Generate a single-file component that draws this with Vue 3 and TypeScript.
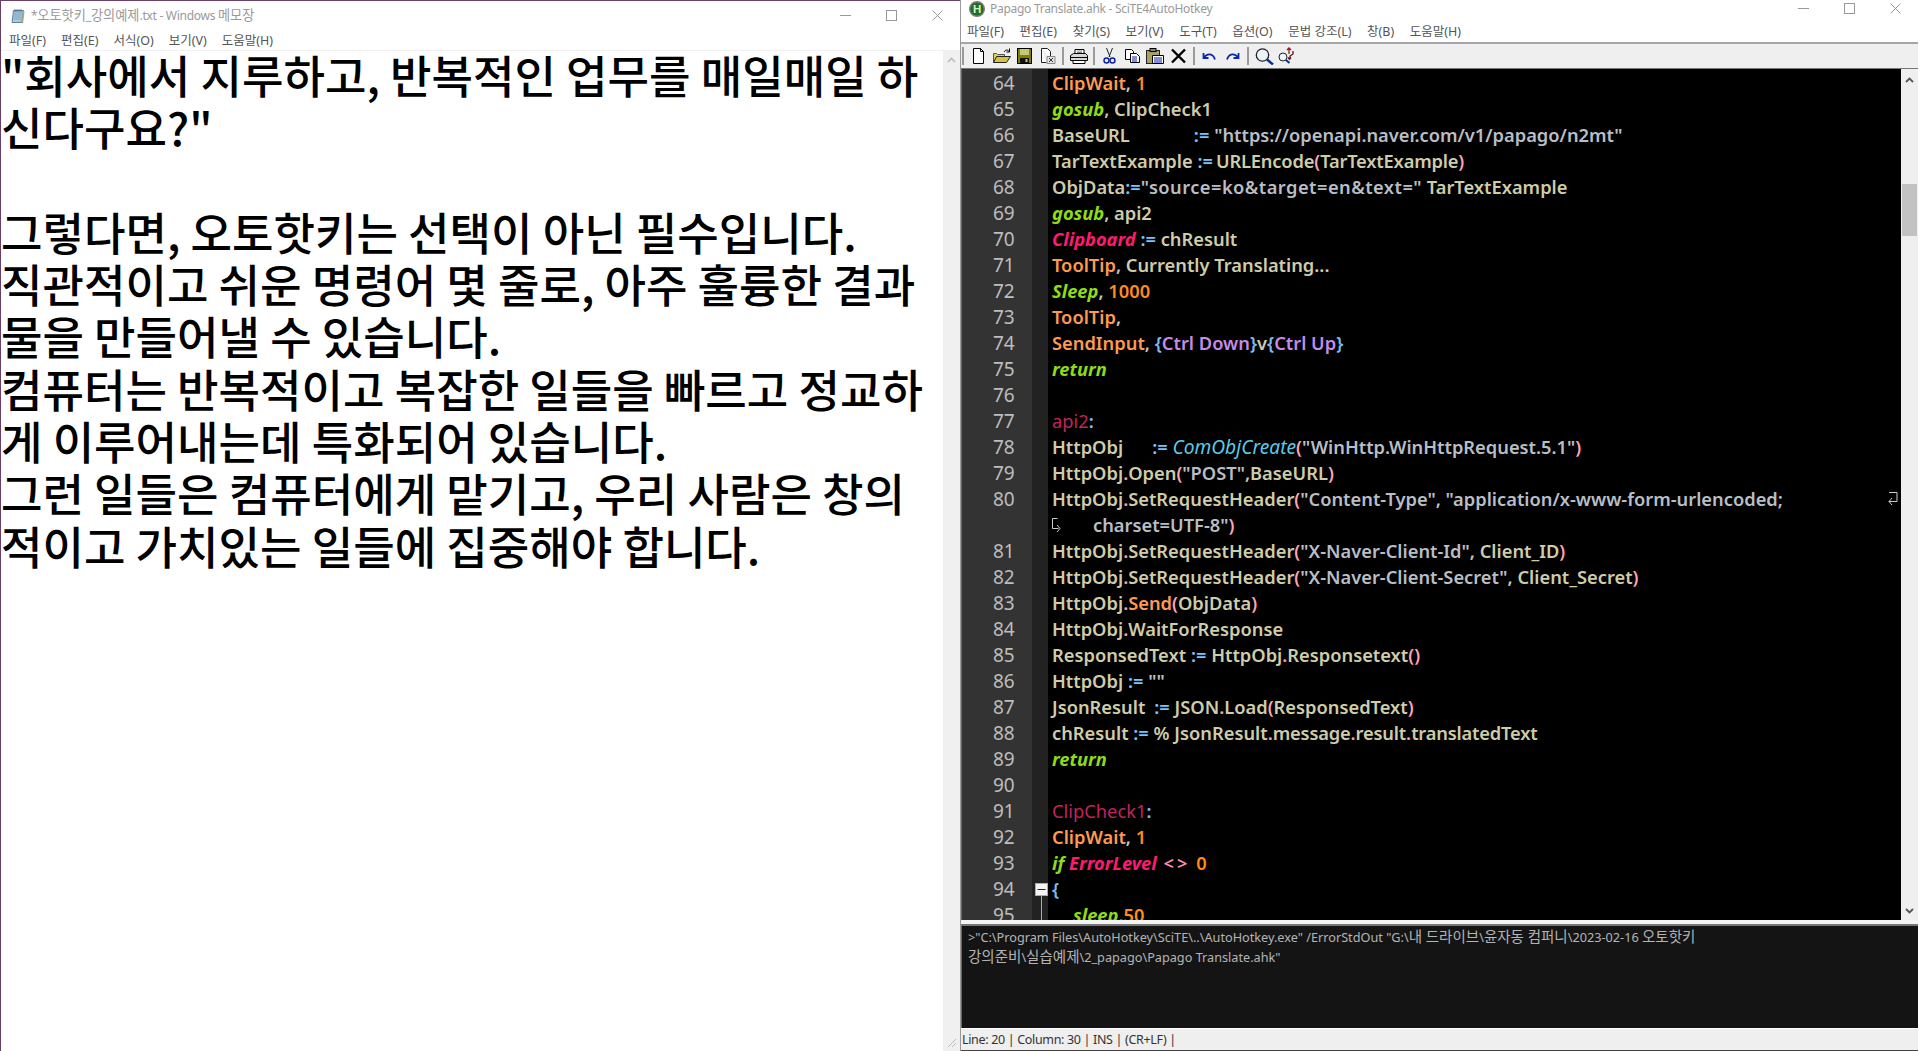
<script setup lang="ts">
interface Seg { t?: string; c?: string; gap?: number }
interface Row { n?: number; segs: Seg[]; indent?: number; wrapStart?: boolean; wrapEnd?: boolean; fold?: boolean; foldLine?: boolean }

const noteLines = [
  '"회사에서 지루하고, 반복적인 업무를 매일매일 하',
  '신다구요?"',
  '',
  '그렇다면, 오토핫키는 선택이 아닌 필수입니다.',
  '직관적이고 쉬운 명령어 몇 줄로, 아주 훌륭한 결과',
  '물을 만들어낼 수 있습니다.',
  '컴퓨터는 반복적이고 복잡한 일들을 빠르고 정교하',
  '게 이루어내는데 특화되어 있습니다.',
  '그런 일들은 컴퓨터에게 맡기고, 우리 사람은 창의',
  '적이고 가치있는 일들에 집중해야 합니다.',
]
const noteMenu = ['파일(F)', '편집(E)', '서식(O)', '보기(V)', '도움말(H)']
const sciMenu = ['파일(F)', '편집(E)', '찾기(S)', '보기(V)', '도구(T)', '옵션(O)', '문법 강조(L)', '창(B)', '도움말(H)']

const s = (t: string, c = 'tx'): Seg => ({ t, c })
const hdr = (a: string, rest: Seg[]): Seg[] => [s('HttpObj'), s('.', 'pn'), s('SetRequestHeader'), s('(', 'pr'), s(a, 'st'), ...rest]

const rows: Row[] = [
  { n: 64, segs: [s('ClipWait', 'cmd'), s(', ', 'cm'), s('1', 'num')] },
  { n: 65, segs: [s('gosub', 'kw'), s(', ', 'cm'), s('ClipCheck1')] },
  { n: 66, segs: [s('BaseURL'), { gap: 64 }, s(':=', 'op'), s(' '), s('"https://openapi.naver.com/v1/papago/n2mt"', 'st')] },
  { n: 67, segs: [s('TarTextExample'), s(' '), s(':=', 'op'), { gap: 3 }, s('URLEncode tight'), s('(', 'pr'), s('TarTextExample tight'), s(')', 'pr')].map(g => g.t === 'URLEncode tight' ? s('URLEncode', 'tx tight') : g.t === 'TarTextExample tight' ? s('TarTextExample', 'tx tight') : g) },
  { n: 68, segs: [s('ObjData'), s(':=', 'op'), s('"source=ko&target=en&text="', 'st wide'), s(' TarTextExample')] },
  { n: 69, segs: [s('gosub', 'kw'), s(', ', 'cm'), s('api2')] },
  { n: 70, segs: [s('Clipboard', 'var'), s(' '), s(':=', 'op'), s(' chResult')] },
  { n: 71, segs: [s('ToolTip', 'cmd'), s(', ', 'cm'), s('Currently Translating...')] },
  { n: 72, segs: [s('Sleep', 'kw'), s(', ', 'cm'), s('1000', 'num')] },
  { n: 73, segs: [s('ToolTip', 'cmd'), s(',', 'cm')] },
  { n: 74, segs: [s('SendInput', 'cmd'), s(', ', 'cm'), s('{', 'br'), s('Ctrl Down', 'key'), s('}', 'br'), s('v'), s('{', 'br'), s('Ctrl Up', 'key'), s('}', 'br')] },
  { n: 75, segs: [s('return', 'kw')] },
  { n: 76, segs: [] },
  { n: 77, segs: [s('api2', 'lb'), s(':', 'op')] },
  { n: 78, segs: [s('HttpObj'), { gap: 29 }, s(':=', 'op'), s(' '), s('ComObjCreate', 'fn'), s('(', 'pr'), s('"WinHttp.WinHttpRequest.5.1"', 'st'), s(')', 'pr')] },
  { n: 79, segs: [s('HttpObj'), s('.', 'pn'), s('Open'), s('(', 'pr'), s('"POST"', 'st'), s(',', 'cm'), s('BaseURL'), s(')', 'pr')] },
  { n: 80, segs: hdr('"Content-Type"', [s(', ', 'cm'), s('"application/x-www-form-urlencoded;', 'st')]), wrapEnd: true },
  { segs: [s('charset=UTF-8"', 'st'), s(')', 'pr')], wrapStart: true },
  { n: 81, segs: hdr('"X-Naver-Client-Id"', [s(', ', 'cm'), s('Client_ID'), s(')', 'pr')]) },
  { n: 82, segs: hdr('"X-Naver-Client-Secret"', [s(', ', 'cm'), s('Client_Secret'), s(')', 'pr')]) },
  { n: 83, segs: [s('HttpObj'), s('.', 'pn'), s('Send', 'cmd'), s('(', 'pr'), s('ObjData'), s(')', 'pr')] },
  { n: 84, segs: [s('HttpObj'), s('.', 'pn'), s('WaitForResponse')] },
  { n: 85, segs: [s('ResponsedText '), s(':=', 'op'), s(' HttpObj'), s('.', 'pn'), s('Responsetext'), s('()', 'pr')] },
  { n: 86, segs: [s('HttpObj '), s(':=', 'op'), s(' '), s('""', 'st')] },
  { n: 87, segs: [s('JsonResult'), { gap: 9 }, s(':=', 'op'), s(' '), s('JSON'), s('.', 'pn'), s('Load'), s('(', 'pr'), s('ResponsedText'), s(')', 'pr')] },
  { n: 88, segs: [s('chResult '), s(':=', 'op'), s(' % JsonResult'), s('.', 'pn'), s('message', 'tx tight'), s('.', 'pn'), s('result', 'tx tight'), s('.', 'pn'), s('translatedText', 'tx tight')] },
  { n: 89, segs: [s('return', 'kw')] },
  { n: 90, segs: [] },
  { n: 91, segs: [s('ClipCheck1', 'lb'), s(':', 'op')] },
  { n: 92, segs: [s('ClipWait', 'cmd'), s(', ', 'cm'), s('1', 'num')] },
  { n: 93, segs: [s('if', 'kw'), s(' '), s('ErrorLevel', 'var'), s(' '), s('<>', 'cmp'), s(' '), s('0', 'num')] },
  { n: 94, segs: [s('{', 'br')], fold: true },
  { n: 95, segs: [s('sleep', 'kw'), s(',', 'cm'), s('50', 'num')], indent: 25, foldLine: true },
]
</script>

<template>
  <div class="desk">
    <section class="notepad">
      <header class="title n-title">
        <svg class="n-icon" width="16" height="16" viewBox="0 0 16 16">
          <path d="M3.5 2.5h10l-1.5 12h-10z" fill="#a8cbe0" stroke="#5d8399" />
          <path d="M13.2 3l1 0.5-1.5 11.5-0.8-0.5z" fill="#d6c98a" stroke="#8d8a60" stroke-width="0.5" />
          <path d="M4 5h8M3.8 7h8M3.5 9h8M3.3 11h8" stroke="#6f9ab3" stroke-width="0.7" />
          <path d="M5 1v3M7 1v3M9 1v3M11 1v3" stroke="#536c7d" stroke-width="0.8" />
        </svg>
        <span class="title-text">*<span class="ko">오토핫키</span>_<span class="ko">강의예제</span>.txt - Windows <span class="ko">메모장</span></span>
        <div class="controls n-controls">
          <i class="ctl"><svg width="11" height="11" viewBox="0 0 11 11"><path d="M0 5.5h11" stroke="#999" /></svg></i>
          <i class="ctl"><svg width="11" height="11" viewBox="0 0 11 11"><rect x=".5" y=".5" width="10" height="10" fill="none" stroke="#999" /></svg></i>
          <i class="ctl"><svg width="11" height="11" viewBox="0 0 11 11"><path d="M.5.5l10 10M10.5.5l-10 10" stroke="#999" /></svg></i>
        </div>
      </header>
      <nav class="n-menu">
        <span v-for="m in noteMenu" :key="m">{{ m }}</span>
      </nav>
      <div class="n-body">
        <div class="n-text">
          <div v-for="(l, i) in noteLines" :key="i" class="n-line">{{ l }}</div>
        </div>
        <div class="n-scroll">
          <svg class="n-up" width="9" height="6" viewBox="0 0 9 6"><path d="M1 5l3.5-3.5L8 5" fill="none" stroke="#bbb" stroke-width="1.6" /></svg>
          <svg class="n-grip" width="10" height="10" viewBox="0 0 10 10"><path d="M9 1L1 9M9 5L5 9" stroke="#bbb" /></svg>
        </div>
      </div>
    </section>

    <section class="scite">
      <header class="title s-title">
        <svg class="s-icon" width="16" height="16" viewBox="0 0 16 16">
          <circle cx="8" cy="8" r="7.300" fill="#1f6f24" stroke="#7c7c7c" stroke-width="1.400" />
          <text x="8" y="12" text-anchor="middle" class="s-h">H</text>
        </svg>
        <span class="title-text">Papago Translate.ahk - SciTE4AutoHotkey</span>
        <div class="controls">
          <i class="ctl"><svg width="11" height="11" viewBox="0 0 11 11"><path d="M0 5.5h11" stroke="#999" /></svg></i>
          <i class="ctl"><svg width="11" height="11" viewBox="0 0 11 11"><rect x=".5" y=".5" width="10" height="10" fill="none" stroke="#999" /></svg></i>
          <i class="ctl"><svg width="11" height="11" viewBox="0 0 11 11"><path d="M.5.5l10 10M10.5.5l-10 10" stroke="#999" /></svg></i>
        </div>
      </header>
      <nav class="s-menu">
        <span v-for="m in sciMenu" :key="m">{{ m }}</span>
      </nav>
      <div class="toolbar">
        <i class="sep"></i>
        <svg class="tb" viewBox="0 0 23 18">
          <path d="M6.5 1.500h7l3 3v12h-10z" fill="#fff" stroke="#000" /><path d="M13.5 1.500v3h3" fill="none" stroke="#000" />
        </svg>
        <svg class="tb" viewBox="0 0 23 18">
          <path d="M3.5 15.500v-9h3l1 1h7v2" fill="#e0d060" stroke="#555" /><path d="M3.5 15.500l3-6h14l-4 6z" fill="#d8c040" stroke="#222" />
          <path d="M14 5c1.500-2.500 4-2.500 5-.5M19.500 1.500v3.500h-3" fill="none" stroke="#000" />
        </svg>
        <svg class="tb" viewBox="0 0 23 18">
          <rect x="4.500" y="1.500" width="14" height="15" fill="#808000" stroke="#000" />
          <rect x="7" y="2" width="9" height="6" fill="#c8c878" /><rect x="7" y="11" width="9" height="5" fill="#111" /><rect x="12.500" y="12" width="2" height="3" fill="#c8c878" />
        </svg>
        <svg class="tb" viewBox="0 0 23 18">
          <path d="M5.500 1.500h6l3 3v6M5.500 1.500v14h5" fill="#fff" stroke="#222" />
          <path d="M11 9.500h8v7h-8z" fill="#e4e4e4" stroke="#888" /><path d="M13 11l4 4M17 11l-4 4" stroke="#333" />
        </svg>
        <i class="sep"></i>
        <svg class="tb" viewBox="0 0 23 18">
          <path d="M8 2.500h9v5H8z" fill="#fff" stroke="#000" /><path d="M3.500 8.500l3-2h12l2 2v5h-17z" fill="#d8d8d8" stroke="#000" />
          <path d="M3.500 10.500h17" stroke="#000" /><path d="M6 13.500h12v3H6z" fill="#fff" stroke="#000" />
          <path d="M10 4h5M10 5.500h5" stroke="#333" stroke-width=".6" />
        </svg>
        <i class="sep"></i>
        <svg class="tb" viewBox="0 0 23 18">
          <path d="M8.500 1l3.500 9M14.500 1l-3.500 9" stroke="#222" fill="none" />
          <circle cx="8.500" cy="13.500" r="2.500" fill="none" stroke="#0a1ea8" stroke-width="1.400" /><circle cx="14.500" cy="13.500" r="2.500" fill="none" stroke="#0a1ea8" stroke-width="1.400" />
        </svg>
        <svg class="tb" viewBox="0 0 23 18">
          <path d="M4.500 2.500h6l2 2v8h-8z" fill="#fff" stroke="#000" />
          <path d="M9.500 6.500h6l3 3v6h-9z" fill="#fff" stroke="#000" /><path d="M11 10h5M11 12h5M11 14h5" stroke="#0a1ea8" />
        </svg>
        <svg class="tb" viewBox="0 0 23 18">
          <rect x="2.500" y="3.500" width="13" height="13" fill="#a8a060" stroke="#222" /><rect x="6" y="1.500" width="6" height="3" fill="#888" stroke="#000" />
          <path d="M8.500 8.500h11v8h-11z" fill="#fff" stroke="#000" /><path d="M10 11h8M10 13h8M10 15h8" stroke="#0a1ea8" />
        </svg>
        <svg class="tb" viewBox="0 0 23 18">
          <path d="M5 2.500L18 15.500M18 2.500L5 15.500" stroke="#000" stroke-width="2.400" />
        </svg>
        <i class="sep"></i>
        <svg class="tb" viewBox="0 0 23 18">
          <path d="M5.500 6v5h5M6 10.500C9 6 15 6 17 12.500" fill="none" stroke="#0a2aa8" stroke-width="1.800" />
        </svg>
        <svg class="tb" viewBox="0 0 23 18">
          <path d="M17.500 6v5h-5M17 10.500C14 6 8 6 6 12.500" fill="none" stroke="#0a2aa8" stroke-width="1.800" />
        </svg>
        <i class="sep"></i>
        <svg class="tb" viewBox="0 0 23 18">
          <circle cx="10.500" cy="8" r="6.200" fill="#eaf4f8" stroke="#222" stroke-width="1.300" />
          <path d="M15 12.500l6 5" stroke="#0a2aa8" stroke-width="2.400" />
        </svg>
        <svg class="tb" viewBox="0 0 23 18">
          <circle cx="8" cy="10" r="4" fill="#eaf4f8" stroke="#222" />
          <path d="M11 13l3.500 3" stroke="#0a2aa8" stroke-width="2" />
          <path d="M14 1v6M12 3l2-2 2 2" fill="none" stroke="#a01818" stroke-width="1.300" />
          <path d="M18 4v3l-3 2v3M16 10.500l-1.500 1.800-1.500-1.800" fill="none" stroke="#5a1010" stroke-width="1.300" />
        </svg>
      </div>

      <div class="editor">
        <div class="code">
          <div v-for="(r, i) in rows" :key="i" class="row">
            <span class="ln">{{ r.n }}</span>
            <span class="fold">
              <svg v-if="r.fold" class="fold-box" width="13" height="26" viewBox="0 0 13 26">
                <path d="M6.500 20v6" stroke="#aaa" />
                <rect x=".5" y="7.500" width="12" height="12" fill="#f4f4f4" stroke="#aaa" />
                <path d="M2.500 13.500h8" stroke="#222" />
              </svg>
              <svg v-if="r.foldLine" class="fold-box" width="13" height="26" viewBox="0 0 13 26"><path d="M6.500 0v26" stroke="#aaa" /></svg>
            </span>
            <span class="src" :style="r.indent ? { paddingLeft: r.indent + 'px' } : undefined">
              <svg v-if="r.wrapStart" class="wrap-s" width="10" height="16" viewBox="0 0 10 16">
                <path d="M.5 1.500h5M.5 1.500v10h6M5 8l3 3.500-3 3.500" fill="none" stroke="#ccc" />
              </svg>
              <template v-for="(g, j) in r.segs" :key="j">
                <span v-if="g.gap" class="gap" :style="{ width: g.gap + 'px' }"></span>
                <span v-else :class="g.c">{{ g.t }}</span>
              </template>
            </span>
            <svg v-if="r.wrapEnd" class="wrap-e" width="10" height="16" viewBox="0 0 10 16">
              <path d="M1 1.500h8v9H1M4 7L1 10.500 4 14" fill="none" stroke="#ccc" />
            </svg>
          </div>
        </div>
        <div class="e-scroll">
          <svg width="9" height="6" viewBox="0 0 9 6"><path d="M1 5l3.500-3.500L8 5" fill="none" stroke="#555" stroke-width="1.800" /></svg>
          <div class="thumb"></div>
          <svg class="down" width="9" height="6" viewBox="0 0 9 6"><path d="M1 1l3.500 3.500L8 1" fill="none" stroke="#555" stroke-width="1.800" /></svg>
        </div>
      </div>

      <div class="divider"></div>
      <div class="output">
        <div>&gt;"C:\Program Files\AutoHotkey\SciTE\..\AutoHotkey.exe" /ErrorStdOut "G:\<span class="ko">내 드라이브</span>\<span class="ko">윤자동 컴퍼니</span>\2023-02-16 <span class="ko">오토핫키</span></div>
        <div><span class="ko">강의준비</span>\<span class="ko">실습예제</span>\2_papago\Papago Translate.ahk"</div>
      </div>
      <footer class="status">Line: 20 | Column: 30 | INS | (CR+LF) |</footer>
    </section>
  </div>
</template>

<style>
html, body { margin: 0; background: #fff; overflow: hidden; }
</style>

<style scoped>
.desk {
  display: flex;
  width: 1920px;
  height: 1051px;
  background: #fff;
  overflow: hidden;
  font-family: "Noto Sans", "Noto Sans CJK KR", sans-serif;
}
.notepad {
  width: 960px;
  flex: none;
  box-sizing: border-box;
  display: flex;
  flex-direction: column;
  border-top: 1px solid #6a3f66;
  border-left: 1px solid #6a3f66;
}
.title {
  display: flex;
  align-items: center;
  color: #9a9a9a;
  font-size: 12px;
  letter-spacing: -0.28px;
  line-height: 16px;
  white-space: nowrap;
}
.ko { font-size: 1.1em; letter-spacing: 0; }
.n-title { height: 29px; padding-left: 9px; }
.n-icon { margin-right: 5px; }
.s-title { height: 17px; padding: 0 0 5px 8px; }
.s-icon { margin-right: 5px; }
.s-h { font: 700 11.500px "Liberation Sans", sans-serif; fill: #d4f0c4; }
.controls { margin-left: auto; display: flex; }
.ctl { width: 46px; height: 17px; display: flex; align-items: center; justify-content: center; }
.n-menu {
  height: 20px;
  display: flex;
  align-items: center;
  padding-left: 8px;
  gap: 15px;
  font-size: 12.500px;
  line-height: 15px;
  color: #555;
  border-bottom: 1px solid #f0f0f0;
}
.n-body { flex: 1; display: flex; min-height: 0; }
.n-text { flex: 1; }
.n-line {
  height: 52.300px;
  line-height: 47.500px;
  font-family: "Noto Sans CJK KR", "Noto Sans", sans-serif;
  font-size: 45.100px;
  font-weight: 500;
  color: #000;
  white-space: pre;
}
.n-scroll {
  width: 17px;
  flex: none;
  background: #f0f0f0;
  display: flex;
  flex-direction: column;
  align-items: center;
  padding-top: 6px;
  box-sizing: border-box;
}
.n-grip { margin-top: auto; margin-bottom: 3px; }
.scite {
  flex: 1;
  min-width: 0;
  display: flex;
  flex-direction: column;
  padding-right: 2px;
  box-sizing: border-box;
  border-left: 1px solid #9a9a9a;
}
.s-menu {
  height: 20px;
  display: flex;
  align-items: center;
  padding-left: 6px;
  gap: 15.600px;
  font-size: 12.500px;
  line-height: 15px;
  color: #555;
  border-bottom: 2px solid #a6a6a6;
}
.toolbar {
  height: 24px;
  background: #efefef;
  border-bottom: 1px solid #777;
  display: flex;
  align-items: center;
  padding-left: 1px;
}
.tb { width: 23px; height: 18px; flex: none; }
.sep { width: 2px; height: 18px; background: #9a9a9a; margin: 0 3px; flex: none; }
.toolbar .sep:first-child { margin-left: 0; }
.editor {
  height: 853px;
  display: flex;
  border-left: 1px solid #666;
  overflow: hidden;
}
.code { flex: 1; min-width: 0; background: #000; overflow: hidden; padding-top: 1px; }
.row {
  display: flex;
  height: 26px;
  position: relative;
  font-size: 18.300px;
  line-height: 26px;
  font-weight: 600;
  white-space: pre;
}
.ln {
  width: 70px;
  box-sizing: border-box;
  padding-left: 31px;
  background: #333;
  color: #bdbdbd;
  font-size: 19px;
  font-weight: 400;
  flex: none;
}
.fold { width: 16px; background: #222; flex: none; display: block; }
.fold-box { display: block; margin-left: 3px; }
.src { padding-left: 4px; color: #cfcca8; display: flex; align-items: center; }
.wrap-s { margin-right: 31px; flex: none; }
.wrap-e { position: absolute; right: 3px; top: 5px; }
.gap { display: inline-block; flex: none; }
.code .row:first-child .ln { box-shadow: 0 -2px 0 #333; }
.code .row:first-child .fold { box-shadow: 0 -2px 0 #222; }
.tx { color: #cfcca8; }
.cmd { color: #ff9a50; }
.cm { color: #c8c8b0; }
.num { color: #ff8c1a; }
.kw { color: #8fdc14; font-style: italic; font-weight: 700; }
.var { color: #ff1a70; font-style: italic; font-weight: 700; }
.st { color: #b8bec4; }
.wide { letter-spacing: 0.45px; }
.tight { letter-spacing: -0.18px; }
.op { color: #75c4ff; }
.pr { color: #ffa3b5; }
.pn { color: #ff9aa8; }
.lb { color: #c0245f; font-weight: 400; }
.fn { color: #5cc8e8; font-style: italic; font-weight: 400; font-size: 19.200px; }
.key { color: #c28cea; }
.br { color: #7fb8f0; }
.cmp { color: #ff8cb8; letter-spacing: 3px; margin-left: 2px; margin-right: 1px; }
.e-scroll {
  width: 17px;
  flex: none;
  background: #efefef;
  display: flex;
  flex-direction: column;
  align-items: center;
  padding-top: 8px;
  box-sizing: border-box;
}
.thumb { width: 15px; height: 52px; margin-top: 101px; background: #c2c2c2; }
.down { margin-top: auto; margin-bottom: 6px; }
.divider { height: 4px; background: #f4f4f4; border-bottom: 2px solid #777; }
.output {
  height: 102px;
  background: #141414;
  color: #b4b4b4;
  font-size: 12.700px;
  line-height: 19px;
  padding: 1px 0 0 6px;
  box-sizing: border-box;
  white-space: pre;
  border-left: 1px solid #666;
  overflow: hidden;
}
.output .ko { font-size: 14.500px; line-height: 19px; }
.status {
  height: 21px;
  margin-top: 1px;
  background: #efefef;
  color: #333;
  font-size: 12.500px;
  letter-spacing: -0.33px;
  line-height: 21px;
  padding-left: 1px;
  border-bottom: 1px solid #444;
  white-space: pre;
}
</style>
